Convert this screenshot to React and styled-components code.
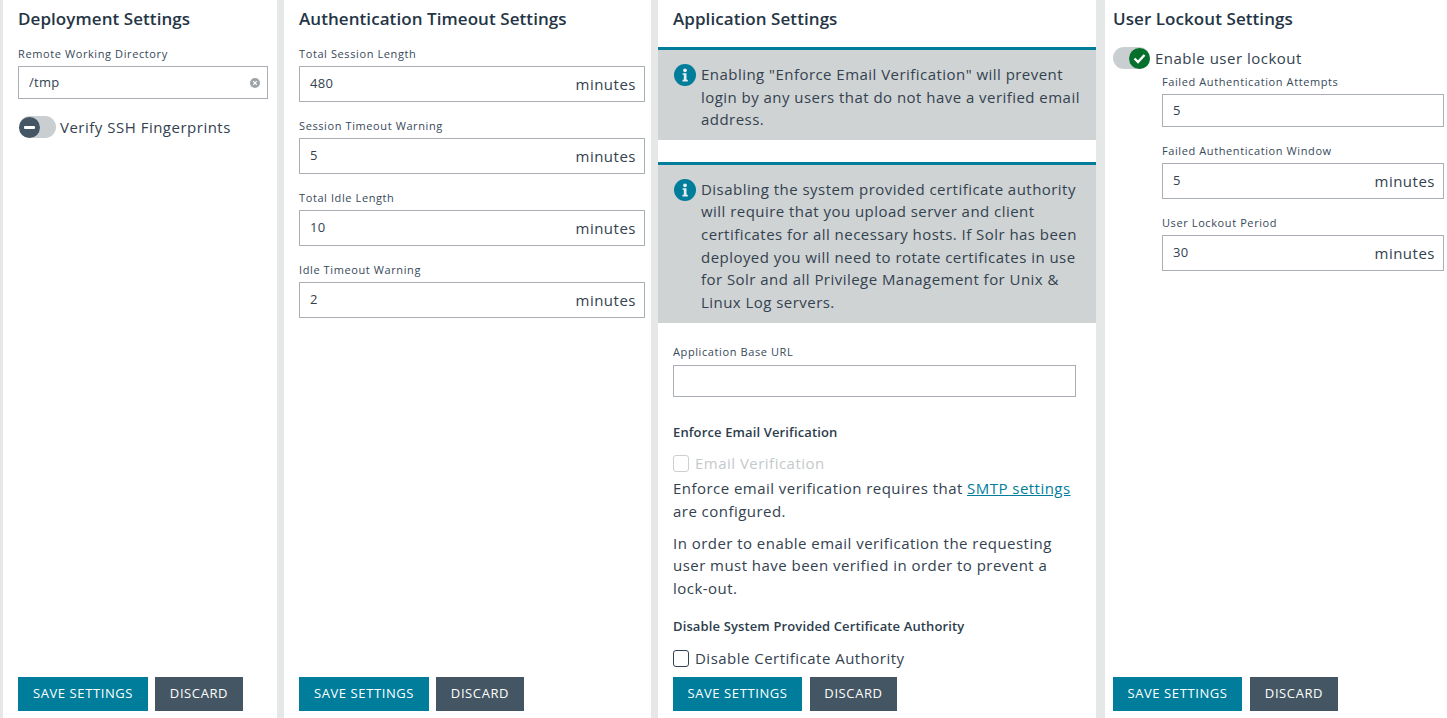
import React from "react";
import styled, { createGlobalStyle } from "styled-components";

const Global = createGlobalStyle`
  html, body { margin: 0; padding: 0; height: 718px; overflow: hidden; background: #e6e8e7; }
  body { font-family: "Open Sans", "Liberation Sans", sans-serif; color: #2b3a4a; }
`;
const Page = styled.div`
  display: grid;
  grid-template-columns: 274px 367px 438px 344px;
  column-gap: 7px;
  padding-left: 3px;
  height: 718px;
  width: 1447px;
  box-sizing: border-box;
`;
const Panel = styled.section`
  background: #fff;
  display: flex;
  flex-direction: column;
  height: 718px;
  box-sizing: border-box;
  padding: 0 ${(p) => p.$right}px 7px ${(p) => p.$left}px;
  margin-left: ${(p) => p.$shift || 0}px;
  overflow: hidden;
  min-width: 0;
`;
const Title = styled.h2`
  font-size: 17px;
  font-weight: 600;
  line-height: 24px;
  letter-spacing: 0.07px;
  margin: 7px 0 0;
  color: #253545;
  white-space: nowrap;
`;
const Body = styled.div`
  flex: 1;
  min-height: 0;
  display: flex;
  flex-direction: column;
`;
const Footer = styled.div`
  display: flex;
  gap: ${(p) => p.$gap}px;
`;
const Button = styled.button`
  height: 34px;
  width: ${(p) => p.$w}px;
  border: 0;
  padding: 0 0 2px;
  font: 400 13px/32px "Open Sans", sans-serif;
  letter-spacing: 0.6px;
  color: #fff;
  background: ${(p) => (p.$primary ? "#007d9b" : "#445663")};
  text-transform: uppercase;
`;
const Field = styled.div`
  margin-top: ${(p) => p.$top}px;
`;
const Label = styled.label`
  display: block;
  font-size: 11px;
  line-height: 16px;
  letter-spacing: 0.6px;
  color: #37495a;
  margin-bottom: ${(p) => p.$gap}px;
`;
const InputBox = styled.div`
  height: ${(p) => p.$h}px;
  box-sizing: border-box;
  border: 1px solid #a9afb4;
  background: #fff;
  display: flex;
  align-items: center;
  padding: 0 8px 0 10px;
  font-size: 13px;
  letter-spacing: 0.3px;
  color: #33424f;
  justify-content: space-between;
`;
const Value = styled.span`
  margin-top: -2px;
`;
const Suffix = styled.span`
  font-size: 15px;
  letter-spacing: 0.5px;
  color: #33424f;
`;
const ClearDot = styled.svg`
  width: 10px;
  height: 10px;
  display: block;
  margin-right: -1px;
`;
const ToggleRow = styled.div`
  display: flex;
  align-items: center;
  gap: ${(p) => p.$gap}px;
  margin-top: ${(p) => p.$top}px;
  margin-left: ${(p) => p.$indent}px;
  font-size: 15px;
  line-height: 24px;
  letter-spacing: 0.5px;
  color: #33424f;
`;
const Track = styled.div`
  position: relative;
  width: 37px;
  height: 22px;
  border-radius: 11px;
  background: #c9ced1;
  flex: none;
`;
const Knob = styled.div`
  position: absolute;
  top: 0;
  ${(p) => (p.$on ? "right: 0;" : "left: 0;")}
  width: 21px;
  height: 21px;
  margin-top: 0.5px;
  border-radius: 50%;
  background: ${(p) => (p.$on ? "#04702c" : "#445663")};
  display: flex;
  align-items: center;
  justify-content: center;
`;
const Indented = styled.div`
  margin-left: 49px;
  margin-top: 4px;
`;
const Alert = styled.div`
  margin: ${(p) => p.$top}px -20px 0 -15px;
  border-top: 3px solid #007d9b;
  background: #cfd3d4;
  padding: ${(p) => p.$pt}px 12px ${(p) => p.$pb}px 16px;
  display: flex;
  gap: 5px;
  font-size: 15px;
  line-height: 22.6px;
  letter-spacing: 0.46px;
  color: #33424f;
`;
const InfoIcon = styled.svg`
  width: 22px;
  height: 22px;
  flex: none;
  margin-top: 1px;
`;
const SubHead = styled.h3`
  font-size: 13px;
  font-weight: 600;
  line-height: 18px;
  letter-spacing: 0.13px;
  margin: ${(p) => p.$top}px 0 0;
  color: #2d3d4d;
`;
const CheckRow = styled.div`
  display: flex;
  align-items: center;
  gap: 6px;
  margin-top: ${(p) => p.$top}px;
  font-size: 15px;
  line-height: 24px;
  letter-spacing: 0.48px;
  color: ${(p) => (p.$disabled ? "#c4c9cc" : "#33424f")};
`;
const Box = styled.span`
  width: 16px;
  height: 17px;
  box-sizing: border-box;
  border: ${(p) => (p.$disabled ? "1px solid #ccd0d3" : "1.5px solid #33424f")};
  border-radius: 3px;
  flex: none;
  background: #fff;
`;
const Para = styled.p`
  margin: ${(p) => p.$top}px 0 0;
  font-size: 15px;
  line-height: 22.6px;
  letter-spacing: 0.46px;
  color: #33424f;
`;
const Link = styled.a`
  color: #007d9b;
  text-decoration: underline;
`;

const Info = () => (
  <InfoIcon viewBox="0 0 22 22">
    <circle cx="11" cy="11" r="11" fill="#007d9b" />
    <circle cx="11" cy="6.3" r="1.9" fill="#e8ecee" />
    <path d="M8.6 9.2h3.9v6.6h1.3v1.6H8.5v-1.6h1.3v-5H8.6z" fill="#e8ecee" />
  </InfoIcon>
);

const TextField = ({ label, value, top, h = 36, gap = 4, suffix, clear }) => (
  <Field $top={top}>
    <Label $gap={gap}>{label}</Label>
    <InputBox $h={h}>
      <Value>{value}</Value>
      {suffix && <Suffix>{suffix}</Suffix>}
      {clear && (
        <ClearDot viewBox="0 0 10 10">
          <circle cx="5" cy="5" r="5" fill="#9da3a9" />
          <path d="M3.2 3.2l3.6 3.6M6.8 3.2l-3.6 3.6" stroke="#fff" strokeWidth="1.2" />
        </ClearDot>
      )}
    </InputBox>
  </Field>
);

const Actions = ({ save = 130, discard = 88, gap = 7 }) => (
  <Footer $gap={gap}>
    <Button $primary $w={save}>Save Settings</Button>
    <Button $w={discard}>Discard</Button>
  </Footer>
);

export default function App() {
  return (
    <Page>
      <Global />
      <Panel $left={15} $right={9}>
        <Title>Deployment Settings</Title>
        <Body>
          <TextField label="Remote Working Directory" value="/tmp" top={15} h={33} clear />
          <ToggleRow $top={16} $gap={4} $indent={1}>
            <Track>
              <Knob>
                <svg width="11" height="3" viewBox="0 0 11 3"><rect width="11" height="3" rx="1" fill="#fff" /></svg>
              </Knob>
            </Track>
            Verify SSH Fingerprints
          </ToggleRow>
        </Body>
        <Actions />
      </Panel>
      <Panel $left={15} $right={6}>
        <Title>Authentication Timeout Settings</Title>
        <Body>
          <TextField label="Total Session Length" value="480" top={15} suffix="minutes" />
          <TextField label="Session Timeout Warning" value="5" top={16} suffix="minutes" />
          <TextField label="Total Idle Length" value="10" top={16} suffix="minutes" />
          <TextField label="Idle Timeout Warning" value="2" top={16} suffix="minutes" />
        </Body>
        <Actions />
      </Panel>
      <Panel $left={15} $right={20}>
        <Title>Application Settings</Title>
        <Body>
          <Alert $top={16} $pt={13} $pb={9}>
            <Info />
            <div>Enabling "Enforce Email Verification" will prevent login by any users that do not have a verified email address.</div>
          </Alert>
          <Alert $top={22} $pt={13} $pb={10}>
            <Info />
            <div>Disabling the system provided certificate authority will require that you upload server and client certificates for all necessary hosts. If Solr has been deployed you will need to rotate certificates in use for Solr and all Privilege Management for Unix &amp; Linux Log servers.</div>
          </Alert>
          <TextField label="Application Base URL" value="" top={21} h={32} gap={5} />
          <SubHead $top={26}>Enforce Email Verification</SubHead>
          <CheckRow $top={10} $disabled><Box $disabled />Email Verification</CheckRow>
          <Para $top={2}>Enforce email verification requires that <Link>SMTP settings</Link> are configured.</Para>
          <Para $top={9}>In order to enable email verification the requesting user must have been verified in order to prevent a lock-out.</Para>
          <SubHead $top={18}>Disable System Provided Certificate Authority</SubHead>
          <CheckRow $top={11}><Box />Disable Certificate Authority</CheckRow>
        </Body>
        <Actions save={129} discard={87} gap={8} />
      </Panel>
      <Panel $left={8} $right={3} $shift={2}>
        <Title>User Lockout Settings</Title>
        <Body>
          <ToggleRow $top={15} $gap={5} $indent={0}>
            <Track>
              <Knob $on>
                <svg width="13" height="11" viewBox="0 0 13 11"><path d="M1.5 5.5l3.5 3.5 6.5-7" fill="none" stroke="#fff" strokeWidth="2.4" /></svg>
              </Knob>
            </Track>
            Enable user lockout
          </ToggleRow>
          <Indented>
            <TextField label="Failed Authentication Attempts" value="5" top={0} h={33} />
            <TextField label="Failed Authentication Window" value="5" top={16} suffix="minutes" />
            <TextField label="User Lockout Period" value="30" top={16} suffix="minutes" />
          </Indented>
        </Body>
        <Actions save={129} discard={88} gap={8} />
      </Panel>
    </Page>
  );
}
